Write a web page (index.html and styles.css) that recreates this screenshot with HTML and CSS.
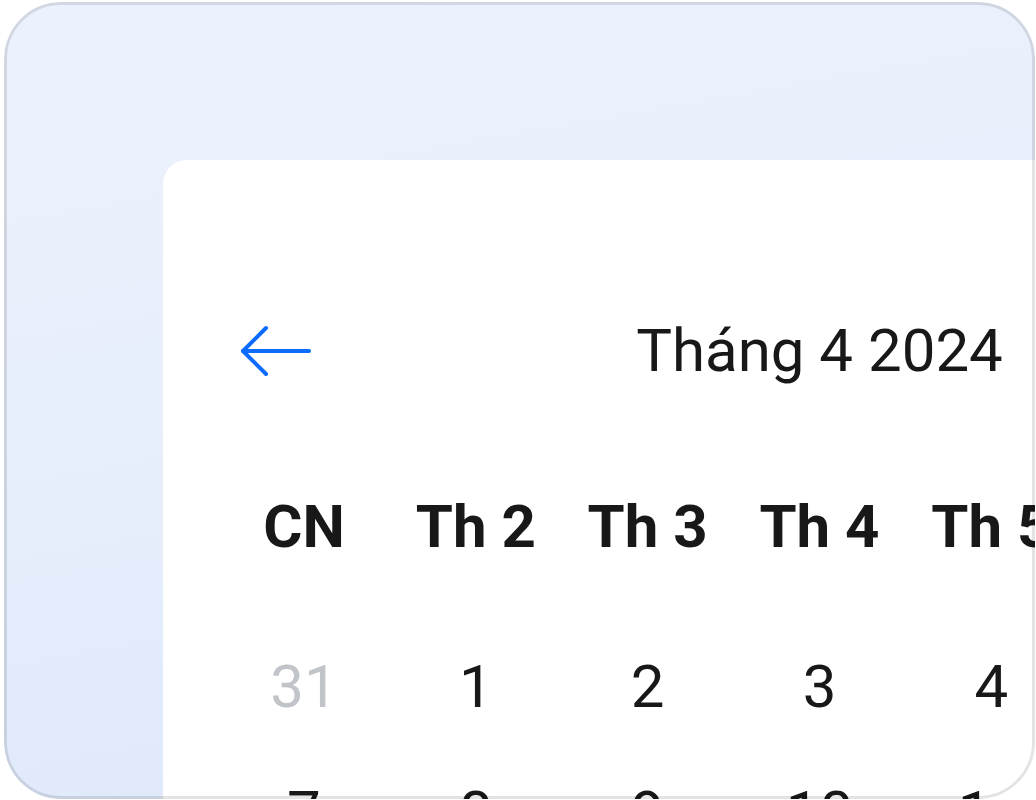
FILE: index.html
```html
<!DOCTYPE html>
<html lang="vi">
<head>
  <meta charset="UTF-8">
  <meta name="viewport" content="width=device-width, initial-scale=1.0">
  <title>Lịch</title>
  <link rel="stylesheet" href="styles.css">
</head>
<body>
  <div class="screen">
    <div class="calendar-card">
      <!-- Month header -->
      <div class="month-header">
        <button class="nav-btn" aria-label="Tháng trước">
          <svg width="72" height="52" viewBox="0 0 72 52" fill="none">
            <polyline points="26,3 3,26 26,49" stroke="currentColor" stroke-width="4" stroke-linecap="round" stroke-linejoin="round"/>
            <line x1="3" y1="26" x2="69" y2="26" stroke="currentColor" stroke-width="4" stroke-linecap="round"/>
          </svg>
        </button>
        <div class="month-title">Tháng 4 2024</div>
        <div></div>
      </div>

      <!-- Weekday labels -->
      <div class="weekdays">
        <div>CN</div>
        <div>Th 2</div>
        <div>Th 3</div>
        <div>Th 4</div>
        <div>Th 5</div>
        <div>Th 6</div>
        <div>Th 7</div>
      </div>

      <!-- Days -->
      <div class="days">
        <div class="day muted">31</div>
        <div class="day">1</div>
        <div class="day">2</div>
        <div class="day">3</div>
        <div class="day">4</div>
        <div class="day">5</div>
        <div class="day">6</div>
        <div class="day">7</div>
        <div class="day">8</div>
        <div class="day">9</div>
        <div class="day">10</div>
        <div class="day">11</div>
        <div class="day">12</div>
        <div class="day">13</div>
        <div class="day">14</div>
        <div class="day">15</div>
        <div class="day">16</div>
        <div class="day">17</div>
        <div class="day">18</div>
        <div class="day">19</div>
        <div class="day">20</div>
        <div class="day">21</div>
        <div class="day">22</div>
        <div class="day">23</div>
        <div class="day">24</div>
        <div class="day">25</div>
        <div class="day">26</div>
        <div class="day">27</div>
        <div class="day">28</div>
        <div class="day">29</div>
        <div class="day">30</div>
        <div class="day muted">1</div>
        <div class="day muted">2</div>
        <div class="day muted">3</div>
        <div class="day muted">4</div>
      </div>
    </div>
  </div>
</body>
</html>
```

FILE: styles.css
```css
* {
  margin: 0;
  padding: 0;
  box-sizing: border-box;
}

body {
  font-family: Roboto, 'Noto Sans', sans-serif;
  background: #ffffff;
  height: 100vh;
  overflow: hidden;
  padding: 2px 0 0 4px;
}

.screen {
  position: relative;
  width: 1031px;
  height: 797px;
  border-radius: 57px;
  overflow: hidden;
  background: linear-gradient(170deg, #ecf2fd 0%, #e8effc 40%, #dde8fa 100%);
  padding: 158px 0 0 159px;
}

/* thin outline drawn over the screen content */
.screen::after {
  content: '';
  position: absolute;
  inset: 0;
  border: 3px solid rgba(0, 0, 0, 0.11);
  border-radius: 57px;
  pointer-events: none;
}

.calendar-card {
  width: 1312px;
  height: 900px;
  background: #ffffff;
  border-top-left-radius: 24px;
  padding: 156px 54px 0 55px;
}

.month-header {
  display: grid;
  grid-template-columns: 1fr auto 1fr;
  align-items: center;
  height: 70px;
}

.nav-btn {
  background: none;
  border: none;
  color: #0b6cfd;
  cursor: pointer;
  display: flex;
  margin-left: 22px;
  justify-self: start;
}

.month-title {
  font-size: 60px;
  line-height: 70px;
  color: #181818;
}

.weekdays {
  display: grid;
  grid-template-columns: repeat(7, 1fr);
  margin-top: 106px;
  font-size: 60px;
  font-weight: 700;
  line-height: 70px;
  color: #181818;
  text-align: center;
}

.days {
  display: grid;
  grid-template-columns: repeat(7, 1fr);
  row-gap: 56px;
  margin-top: 90px;
}

.day {
  font-size: 60px;
  line-height: 70px;
  color: #181818;
  text-align: center;
}

.day.muted {
  color: #c1c4c8;
}
```
